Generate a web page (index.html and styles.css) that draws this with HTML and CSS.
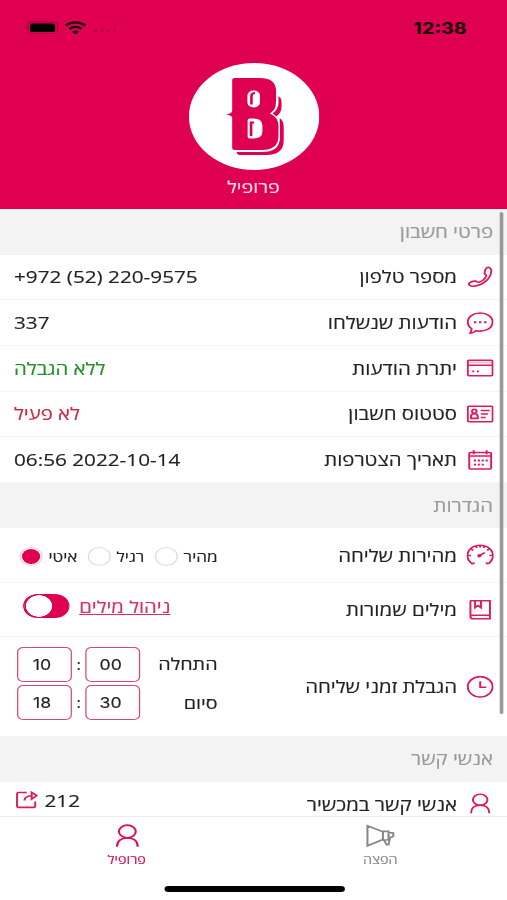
FILE: index.html
```html
<!DOCTYPE html>
<html lang="he">
<head>
  <meta charset="UTF-8">
  <meta name="viewport" content="width=device-width, initial-scale=1.0">
  <title>פרופיל</title>
  <link rel="stylesheet" href="styles.css">
</head>
<body>
  <div class="phone" dir="rtl">
    <header>
      <div class="status-bar">
        <span class="time">12:38</span>
        <div class="status-icons">
          <span class="signal">....</span>
          <svg width="18" height="14" viewBox="0 0 18 14">
            <g fill="none" stroke="#1c0009" stroke-width="2.3">
              <path d="M1 4.6a11.4 11.4 0 0 1 16 0"/>
              <path d="M4 7.9a7.2 7.2 0 0 1 10 0"/>
            </g>
            <path d="M9 13.5l-2.7-2.7a3.9 3.9 0 0 1 5.4 0z"/>
          </svg>
          <svg width="28" height="14" viewBox="0 0 28 14">
            <rect x="3" y="1" width="24.4" height="11.4" rx="3" fill="none" stroke="#000" stroke-opacity=".3" stroke-width=".9"/>
            <rect x="4.6" y="2.5" width="20.6" height="8.6" rx="1.6"/>
            <path d="M1.6 5v3.6a2 2 0 0 1 0-3.6z" fill-opacity=".4"/>
          </svg>
        </div>
      </div>
      <!-- Logo -->
      <svg class="logo" width="107" height="107" viewBox="0 0 107 107">
        <defs>
          <path id="logo-b" d="M37.5 15H58q13.5 0 13.5 13v11q0 8-5 11.500 7 4 7 12.500v10q0 14-14 14H37.500q-2 0-2-2V54.500q-.5-2-5-3 4.500-1 5-3.500V17q0-2 2-2z"/>
        </defs>
        <circle cx="53.5" cy="53.5" r="53.5" fill="#fff"/>
        <path d="M73.500 33q2.500 2 2.500 6v5q0 6-4.500 9.500l-3-3q5-4 5-11zM74.500 55q3.300 3 3.300 9v13.500q0 14.500-14.300 14.500H41q-1.500 0-1.800-3H60q14.500 0 14.500-14z" fill="#e00052"/>
        <use href="#logo-b" fill="#e00052" stroke="#fff" stroke-width="2.4" paint-order="stroke"/>
        <g fill="#fff">
          <rect x="48" y="27.500" width="10.300" height="17" rx="5"/>
          <path d="M50 55.500h3q7.300 0 7.300 7v6q0 7-7.300 7h-3q-1.800 0-1.800-1.800V57.300q0-1.800 1.800-1.800z"/>
        </g>
        <path d="M51.300 41.500V33q.2-3 3-3M51 73V59.500h2.500" fill="none" stroke="#e00052" stroke-width="2.200"/>
      </svg>
      <h1>פרופיל</h1>
    </header>

    <main>
      <h2>פרטי חשבון</h2>
      <div class="row">
        <svg class="icon" viewBox="0 0 22 22"><path d="M16.200 2c1.600-1.500 4.300.2 3.900 3.500C19.500 13 13 19.500 5.500 20.200c-3 .2-4.600-1.600-3.300-3.300 1-1.200 3.300-1.900 4.900-1.800 1.500.1 1.300 1.700 2.900 1.200 2.500-1 4.900-3.500 5.900-6 .5-1.600-1.100-1.500-1.300-3 0-1.800.6-4.200 1.600-5.300z"/></svg>
        <span class="label">מספר טלפון</span>
        <span class="value" dir="ltr">+972 (52) 220-9575</span>
      </div>
      <div class="row">
        <svg class="icon" viewBox="0 0 22 22"><path d="M11 1C5.200 1 .8 4.800.8 10c0 2.700 1.100 4.900 3.100 6.500 0 2-.4 3.500-1 4.700 2-.4 3.500-1.200 4.600-2.500 7.300 1.600 13.700-2.200 13.700-8.700C21.200 4.800 16.800 1 11 1z"/><path d="M5.800 10.200h2M10 10.200h2M14.200 10.200h2" stroke-width="2"/></svg>
        <span class="label">הודעות שנשלחו</span>
        <span class="value">337</span>
      </div>
      <div class="row">
        <svg class="icon" viewBox="0 0 22 22"><rect x=".8" y="3.300" width="20.400" height="15.500" rx="1.200"/><path d="M.8 8.200h20.400"/><path d="M.8 5.500h20.400" stroke-opacity=".3"/><path d="M4.500 14.300h1.600M8.300 14.300h1.600" stroke-width="1.700"/></svg>
        <span class="label">יתרת הודעות</span>
        <span class="value green">ללא הגבלה</span>
      </div>
      <div class="row">
        <svg class="icon" viewBox="0 0 22 22"><rect x=".8" y="3.300" width="20.400" height="15.500" rx="1"/><circle cx="6.200" cy="8.300" r="1.900"/><path d="M3.400 15.400v-2q0-2.600 2.800-2.600T9 13.400v2zM11.500 7.500h7.300M11.500 11h6M11.500 14.500h4"/></svg>
        <span class="label">סטטוס חשבון</span>
        <span class="value red">לא פעיל</span>
      </div>
      <div class="row">
        <svg class="icon" viewBox="0 0 22 22"><rect x="2" y="3.500" width="18" height="16.500" rx="1"/><path d="M2 7h18M5.700 1.300v4M16.300 1.300v4"/><path d="M5.800 11.500h1.800M9 11.500h1.800M12.200 11.500H14M15.400 11.500h1.800M5.800 15.700h1.800M9 15.700h1.800M12.200 15.700H14" stroke-width="1.800"/></svg>
        <span class="label">תאריך הצטרפות</span>
        <span class="value" dir="ltr">06:56 2022-10-14</span>
      </div>

      <h2>הגדרות</h2>
      <div class="row tall">
        <svg class="icon" viewBox="0 0 22 22"><path d="M4.500 20C-4 11.500 2.500 1.200 11 1.200S26 11.500 17.500 20M4.500 20l1.800-1.400M17.500 20l-1.800-1.400M1 11.500h2.500M18.500 11.500H21M3.800 5.200l1.500 1.300M18.200 5.200l-1.500 1.300M7.500 2.200l.8 1.800M14.500 2.200l-.8 1.800M11 1.500v2"/><path d="M10 12L14.800 8.600"/><circle cx="10.300" cy="11.700" r=".9"/></svg>
        <span class="label">מהירות שליחה</span>
        <div class="radios">
          <span>מהיר</span><i class="radio"></i>
          <span>רגיל</span><i class="radio"></i>
          <span>איטי</span><i class="radio checked"></i>
        </div>
      </div>
      <div class="row tall">
        <svg class="icon" viewBox="0 0 22 22"><path d="M3.500 1.700H19v18H5q-2 0-2-2V2.200zM3 17.700q0-1.500 2-1.500h14M6.800 2v6.700L9.200 6.500l2.400 2.200V2"/></svg>
        <span class="label">מילים שמורות</span>
        <div class="words">
          <a href="#">ניהול מילים</a>
          <span class="toggle"></span>
        </div>
      </div>
      <div class="row hours">
        <svg class="icon" viewBox="0 0 22 22"><circle cx="11" cy="10.800" r="10.200"/><path d="M11 5.300v6h5"/></svg>
        <span class="label">הגבלת זמני שליחה</span>
        <div class="times">
          <div class="time-row">
            <span>התחלה</span>
            <div class="inputs" dir="ltr"><b class="box">10</b>:<b class="box">00</b></div>
          </div>
          <div class="time-row">
            <span>סיום</span>
            <div class="inputs" dir="ltr"><b class="box">18</b>:<b class="box">30</b></div>
          </div>
        </div>
      </div>

      <h2>אנשי קשר</h2>
      <div class="row contacts">
        <svg class="icon" viewBox="0 0 22 22"><ellipse cx="11" cy="6.800" rx="6" ry="5.500"/><path d="M3.500 20.200c0-5 2.800-7.900 7.500-7.900s7.500 2.900 7.500 7.900"/></svg>
        <span class="label">אנשי קשר במכשיר</span>
        <div class="share">
          <span>212</span>
          <svg width="18" height="18" viewBox="0 0 18 18"><path d="M9 1.500H2.200Q1 1.500 1 2.700v12.500q0 1.200 1.200 1.200h12.500q1.200 0 1.200-1.200V10.500M7 9.500q.5-4.800 6.500-4.800M13 1.300l4.200 3.200L13 8z"/></svg>
        </div>
      </div>
    </main>
    <div class="scrollbar"></div>

    <nav>
      <a class="tab" href="#">
        <svg width="24" height="24" viewBox="0 0 24 24"><path d="M1.500 1.800v20L14.200 15.500V7.800zM14.200 7.300h4.600v7.700l-1 1h-3.600zM18.800 8.500l3.900.6v3.400l-3.900 1.500M15 16l2.200 4.600h1.600l1.200-6.800"/></svg>
        <span>הפצה</span>
      </a>
      <a class="tab active" href="#">
        <svg width="24" height="24" viewBox="0 0 24 24"><ellipse cx="12.500" cy="7.500" rx="6.900" ry="6.300"/><path d="M4 22.700c0-5.500 3.300-8.900 8.500-8.900s8.500 3.400 8.500 8.900"/></svg>
        <span>פרופיל</span>
      </a>
      <div class="home-bar"></div>
    </nav>
  </div>
</body>
</html>
```
FILE: styles.css
```css
* {
  margin: 0;
  padding: 0;
  box-sizing: border-box;
}

body {
  height: 900px;
  overflow: hidden;
  background-color: #fff;
}

.phone {
  position: relative;
  display: flex;
  flex-direction: column;
  width: 416px;
  height: 900px;
  overflow: hidden;
  transform: scaleX(1.21875);
  transform-origin: 0 0;
  font-family: "Open Sans", "Noto Sans", sans-serif;
  font-size: 17px;
  color: #222;
  -webkit-text-stroke: .15px currentColor;
}

/* Header */
header {
  display: flex;
  flex-direction: column;
  align-items: center;
  height: 209px;
  flex-shrink: 0;
  background-color: #e00052;
}

.status-bar {
  display: flex;
  justify-content: space-between;
  align-items: center;
  width: 100%;
  height: 56px;
  padding: 0 33px 0 20px;
  color: #1c0009;
}

.time {
  font: bold 16.3px Inter, sans-serif;
}

.status-icons {
  display: flex;
  align-items: center;
  gap: 5px;
}

.signal {
  position: relative;
  top: -2px;
  font-size: 16px;
  letter-spacing: 1px;
  opacity: .3;
}

.logo {
  margin-top: 7px;
}

header h1 {
  margin-top: 5px;
  font-size: 16.2px;
  line-height: 25px;
  font-weight: 400;
  color: #ffdce8;
}

/* List */
main {
  flex: 1;
  overflow: hidden;
}

h2 {
  height: 45.5px;
  padding: 0 11.5px;
  background-color: #f3f3f3;
  font-size: 16.7px;
  line-height: 46px;
  font-weight: 400;
  color: #999;
}

.row {
  display: flex;
  align-items: center;
  height: 45.7px;
  padding: 0 11px 0 11.5px;
  border-bottom: 1px solid #f4f4f4;
}

.row.tall {
  height: 54.5px;
}

.row.hours {
  height: 99px;
  border-bottom: 0;
}

.row.contacts {
  height: 46px;
}

.icon {
  width: 22px;
  height: 22px;
  margin-left: 8px;
}

svg.icon,
.share svg {
  fill: none;
  stroke: #de1a5a;
  stroke-width: 1.6;
}

.label {
  flex: 1;
  font-size: 16.75px;
}

.value.green {
  color: #22902a;
}

.value.red {
  color: #cc2a48;
}

.value.green,
.value.red {
  font-size: 16.7px;
}

.radios,
.words,
.share {
  display: flex;
  align-items: center;
}

.radios {
  width: 167px;
  padding-top: 2px;
  font-size: 14px;
}

.radios span {
  margin-left: 4.500px;
}

.radio {
  flex-shrink: 0;
  width: 19px;
  height: 19px;
  margin-left: 8.700px;
  border: 1.5px solid #ddd;
  border-radius: 50%;
}

.radio.checked {
  margin-left: 0;
  border-color: #f3cfdc;
  background: #e00052 content-box;
  padding: 1px;
}

.words {
  gap: 8px;
  padding: 0 0 7px 7.5px;
}

.words a {
  font-size: 16.6px;
  color: #dc2c68;
}

.toggle {
  width: 38px;
  height: 24px;
  border: 1px solid #e00052;
  border-radius: 12px;
  background: radial-gradient(circle at 12px 11px, #fff 10.5px, #e00052 11px);
}

.times {
  width: 167px;
  padding: 0 0 7px 2.5px;
}

.time-row {
  display: flex;
  align-items: center;
  justify-content: space-between;
  height: 38.3px;
  font-size: 16.2px;
}

.inputs {
  display: flex;
  align-items: center;
  gap: 3.8px;
  font-size: 14px;
}

.box {
  width: 45px;
  height: 35px;
  border: 1.5px solid #d94577;
  border-radius: 5px;
  padding-right: 4px;
  text-align: center;
  font: 14.5px/33px Inter, sans-serif;
}

.share {
  gap: 5.5px;
  padding: 0 0 8px 1.5px;
}

.scrollbar {
  position: absolute;
  left: 409.5px;
  top: 212px;
  width: 3.5px;
  height: 502px;
  border-radius: 2px;
  background-color: #999;
}

/* Tab bar */
nav {
  position: relative;
  display: flex;
  height: 84px;
  flex-shrink: 0;
  border-top: 1px solid #eee;
  background-color: #fff;
}

.tab {
  flex: 1;
  display: flex;
  flex-direction: column;
  align-items: center;
  padding-top: 7px;
  font-size: 11.8px;
  color: #888;
  text-decoration: none;
}

.tab svg {
  fill: none;
  stroke: currentColor;
  stroke-width: 1.7;
}

.tab span {
  margin-top: 3px;
}

.tab.active {
  color: #dc0f56;
}

.home-bar {
  position: absolute;
  left: 134.5px;
  bottom: 8px;
  width: 148px;
  height: 6px;
  border-radius: 3px;
  background-color: #000;
}
```
